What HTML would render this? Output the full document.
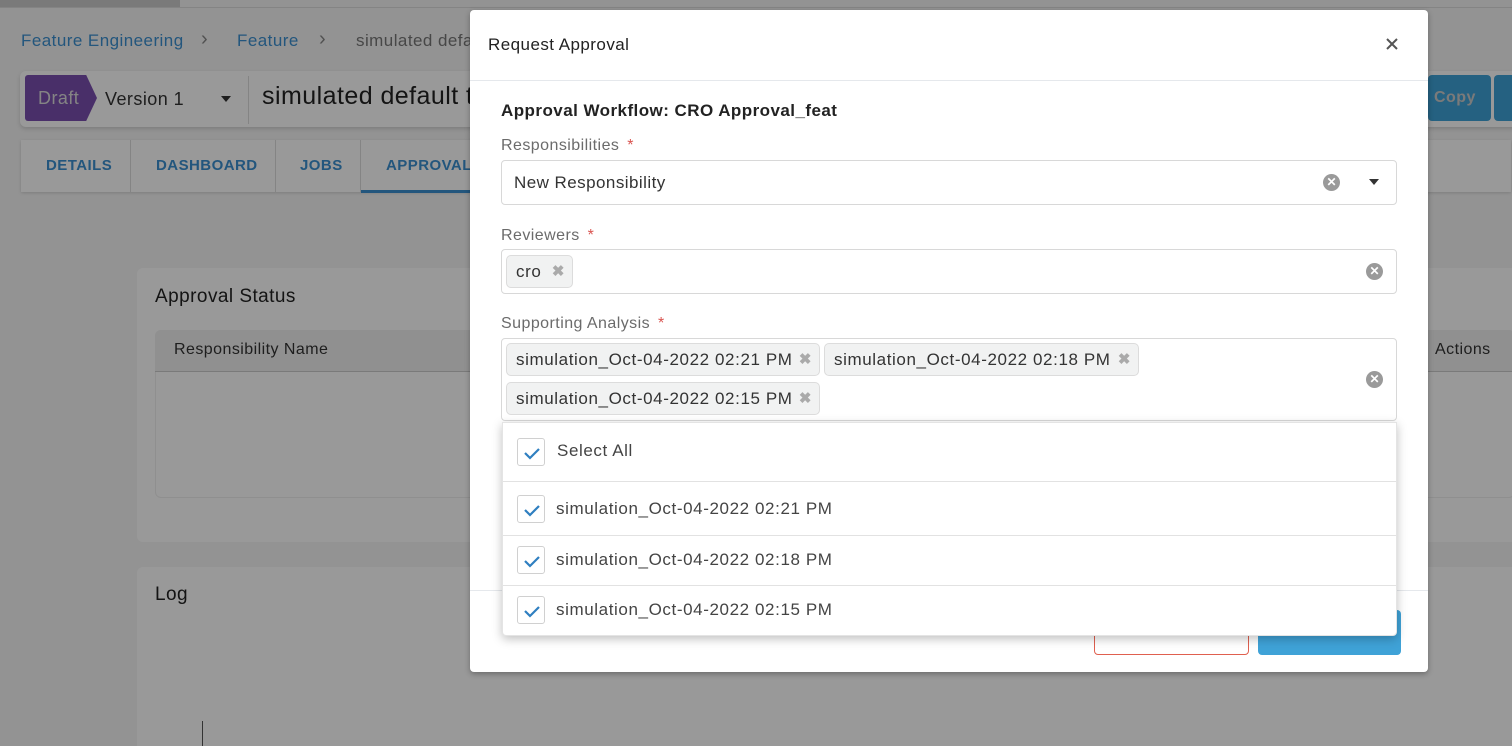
<!DOCTYPE html>
<html style="overflow:hidden;width:1512px;height:746px"><head><meta charset="utf-8"><style>
*{box-sizing:border-box;margin:0;padding:0}
body{width:1512px;height:746px;overflow:hidden;background:#f5f5f5;font-family:"Liberation Sans",sans-serif;position:relative;color:#222;letter-spacing:0.45px}
.abs{position:absolute}
.ov{position:absolute;left:0;top:0;width:1512px;height:746px;background:rgba(0,0,0,0.4)}
.modal{position:absolute;left:470px;top:10px;width:958px;height:662px;background:#fff;border-radius:4px;box-shadow:0 2px 6px rgba(0,0,0,.3)}
.lbl{position:absolute;left:31px;font-size:16px;color:#6b6b6b}
.lbl span{color:#d9534f;margin-left:3px}
.inp{position:absolute;left:31px;width:896px;border:1px solid #d8d8d8;border-radius:4px;background:#fff}
.tag{position:absolute;height:33px;background:#f1f2f2;border:1px solid #dcdcdc;border-radius:5px;font-size:17px;color:#333;padding:6px 0 0 9px;letter-spacing:0.6px}
.tag b{position:absolute;right:7px;top:6px;color:#aaa;font-size:15px}
.clr{position:absolute;width:17px;height:17px;border-radius:50%;background:#9a9a9a;color:#fff;font-size:12px;line-height:17px;text-align:center;font-weight:bold;letter-spacing:0}
.dd{position:absolute;left:502px;top:422px;width:895px;height:214px;background:#fff;border-radius:0 0 4px 4px;box-shadow:0 3px 10px rgba(0,0,0,.25);border:1px solid #e4e4e4}
.row{position:absolute;left:0;width:893px;border-bottom:1px solid #e2e2e2;font-size:17px;color:#444;letter-spacing:0.6px}
.cb{position:absolute;left:14px;width:28px;height:28px;border:1px solid #d0d0d0;border-radius:3px;background:#fff}
</style></head><body>
<div class="abs" style="left:0;top:0;width:180px;height:7px;background:#ccc"></div>
<div class="abs" style="left:0;top:7px;width:1512px;height:1px;background:#ddd"></div>
<div class="abs" style="left:21px;top:31px;font-size:17px;color:#3b8fd0">Feature Engineering</div>
<div class="abs" style="left:201px;top:28px;font-size:20px;color:#888">&#x203A;</div>
<div class="abs" style="left:237px;top:31px;font-size:17px;color:#3b8fd0">Feature</div>
<div class="abs" style="left:319px;top:28px;font-size:20px;color:#888">&#x203A;</div>
<div class="abs" style="left:356px;top:31px;font-size:17px;color:#777">simulated defa</div>
<div class="abs" style="left:20px;top:71px;width:1500px;height:56px;background:#fff;border-radius:6px;box-shadow:0 2px 4px rgba(0,0,0,.15)"></div>
<div class="abs" style="left:25px;top:75px;width:72px;height:46px;background:#7b4fb0;clip-path:polygon(0 0,85% 0,100% 50%,85% 100%,0 100%);border-radius:3px 0 0 3px;color:#ddd;font-size:18px;padding:13px 0 0 13px">Draft</div>
<div class="abs" style="left:105px;top:89px;font-size:18px;color:#333">Version 1</div>
<div class="abs" style="left:221px;top:96px;border:5px solid transparent;border-top:6px solid #333"></div>
<div class="abs" style="left:248px;top:76px;width:1px;height:48px;background:#ddd"></div>
<div class="abs" style="left:262px;top:82px;font-size:25px;color:#222">simulated default t</div>
<div class="abs" style="left:1428px;top:75px;width:63px;height:46px;background:#3fa2d7;border-radius:4px;color:#ccc;font-weight:bold;font-size:16px;padding:14px 0 0 6px">Copy</div>
<div class="abs" style="left:1494px;top:75px;width:30px;height:46px;background:#3fa2d7;border-radius:4px"></div>
<div class="abs" style="left:21px;top:140px;width:1490px;height:52px;background:#fff;box-shadow:0 1px 3px rgba(0,0,0,.15)"></div>
<div class="abs" style="left:46px;top:157px;font-size:15px;font-weight:bold;color:#3b8fd0">DETAILS</div>
<div class="abs" style="left:130px;top:140px;width:1px;height:52px;background:#ddd"></div>
<div class="abs" style="left:156px;top:157px;font-size:15px;font-weight:bold;color:#3b8fd0">DASHBOARD</div>
<div class="abs" style="left:275px;top:140px;width:1px;height:52px;background:#ddd"></div>
<div class="abs" style="left:300px;top:157px;font-size:15px;font-weight:bold;color:#3b8fd0">JOBS</div>
<div class="abs" style="left:360px;top:140px;width:1px;height:52px;background:#ddd"></div>
<div class="abs" style="left:386px;top:157px;font-size:15px;font-weight:bold;color:#3b8fd0">APPROVALS</div>
<div class="abs" style="left:361px;top:190px;width:115px;height:3px;background:#3b8fd0"></div>
<div class="abs" style="left:137px;top:268px;width:1375px;height:274px;background:#fff;border-radius:6px 0 0 6px"></div>
<div class="abs" style="left:155px;top:286px;font-size:19px;color:#222">Approval Status</div>
<div class="abs" style="left:155px;top:330px;width:1360px;height:168px;border-radius:6px;background:#fff;border:1px solid #eee"></div>
<div class="abs" style="left:155px;top:330px;width:1360px;height:42px;background:#f0f0f0;border-bottom:1px solid #ccc;border-radius:6px 6px 0 0"></div>
<div class="abs" style="left:174px;top:341px;font-size:16px;color:#333">Responsibility Name</div>
<div class="abs" style="left:1435px;top:341px;font-size:16px;color:#333">Actions</div>
<div class="abs" style="left:137px;top:567px;width:1375px;height:179px;background:#fff;border-radius:6px 0 0 0"></div>
<div class="abs" style="left:155px;top:584px;font-size:19px;color:#222">Log</div>
<div class="abs" style="left:202px;top:721px;width:1px;height:25px;background:#555"></div>
<div class="ov"></div>

<div class="modal">
  <div class="abs" style="left:18px;top:25px;font-size:17px;color:#222">Request Approval</div>
  <svg class="abs" style="left:916px;top:28px" width="12" height="12"><path d="M1 1L11 11M11 1L1 11" stroke="#555" stroke-width="2"/></svg>
  <div class="abs" style="left:0;top:70px;width:958px;height:1px;background:#e5e8ec"></div>
  <div class="abs" style="left:31px;top:91px;font-size:17px;font-weight:bold;color:#222">Approval Workflow: CRO Approval_feat</div>
  <div class="lbl" style="top:127px">Responsibilities <span>*</span></div>
  <div class="inp" style="top:150px;height:45px"><div class="abs" style="left:12px;top:12px;font-size:17px;color:#333">New Responsibility</div>
    <div class="clr" style="left:821px;top:13px">&#x2715;</div>
    <div class="abs" style="left:867px;top:18px;border:5px solid transparent;border-top:6px solid #333"></div></div>
  <div class="lbl" style="top:217px">Reviewers <span>*</span></div>
  <div class="inp" style="top:239px;height:45px">
    <div class="tag" style="left:4px;top:5px;width:67px">cro<b>&#x2716;</b></div>
    <div class="clr" style="left:864px;top:13px">&#x2715;</div></div>
  <div class="lbl" style="top:305px">Supporting Analysis <span>*</span></div>
  <div class="inp" style="top:328px;height:83px">
    <div class="tag" style="left:4px;top:4px;width:314px">simulation_Oct-04-2022 02:21 PM<b>&#x2716;</b></div>
    <div class="tag" style="left:322px;top:4px;width:315px">simulation_Oct-04-2022 02:18 PM<b>&#x2716;</b></div>
    <div class="tag" style="left:4px;top:43px;width:314px">simulation_Oct-04-2022 02:15 PM<b>&#x2716;</b></div>
    <div class="clr" style="left:864px;top:32px">&#x2715;</div></div>
  <div class="abs" style="left:0;top:580px;width:958px;height:1px;background:#e5e8ec"></div>
  <div class="abs" style="left:624px;top:600px;width:155px;height:45px;border:1px solid #e0604f;border-radius:4px"></div>
  <div class="abs" style="left:788px;top:600px;width:143px;height:45px;background:#3fa2d7;border-radius:4px"></div>
</div>

<div class="dd">
  <div class="row" style="top:0;height:59px"><div class="cb" style="top:15px"><svg width="28" height="28"><path d="M7 14l5 5 9-9" stroke="#2f7fc0" stroke-width="2.2" fill="none"/></svg></div><div class="abs" style="left:54px;top:18px">Select All</div></div>
  <div class="row" style="top:59px;height:54px"><div class="cb" style="top:13px"><svg width="28" height="28"><path d="M7 14l5 5 9-9" stroke="#2f7fc0" stroke-width="2.2" fill="none"/></svg></div><div class="abs" style="left:53px;top:17px">simulation_Oct-04-2022 02:21 PM</div></div>
  <div class="row" style="top:113px;height:50px"><div class="cb" style="top:10px"><svg width="28" height="28"><path d="M7 14l5 5 9-9" stroke="#2f7fc0" stroke-width="2.2" fill="none"/></svg></div><div class="abs" style="left:53px;top:14px">simulation_Oct-04-2022 02:18 PM</div></div>
  <div class="row" style="top:163px;height:50px;border:0"><div class="cb" style="top:10px"><svg width="28" height="28"><path d="M7 14l5 5 9-9" stroke="#2f7fc0" stroke-width="2.2" fill="none"/></svg></div><div class="abs" style="left:53px;top:14px">simulation_Oct-04-2022 02:15 PM</div></div>
</div>
</body></html>
